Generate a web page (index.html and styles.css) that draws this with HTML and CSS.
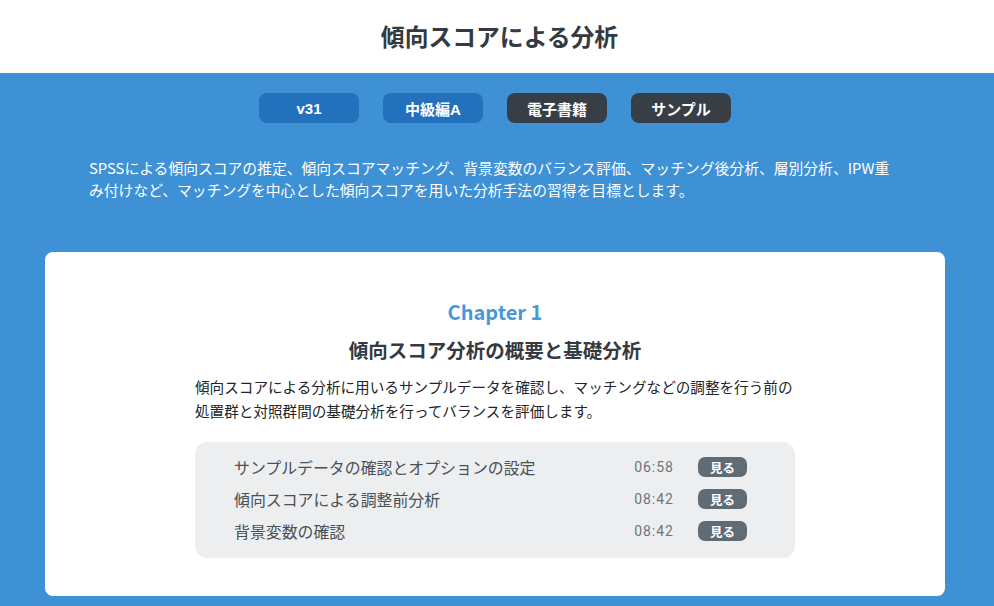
FILE: index.html
```html
<!DOCTYPE html>
<html lang="ja">
<head>
<meta charset="utf-8">
<title>傾向スコアによる分析</title>
<link rel="stylesheet" href="styles.css">
</head>
<body>
<header class="top">
  <h1 class="title">傾向スコアによる分析</h1>
</header>
<main class="hero">
  <div class="badges">
    <span class="badge badge-blue">v31</span>
    <span class="badge badge-blue">中級編A</span>
    <span class="badge badge-dark">電子書籍</span>
    <span class="badge badge-dark">サンプル</span>
  </div>
  <p class="desc">SPSSによる傾向スコアの推定、傾向スコアマッチング、背景変数のバランス評価、マッチング後分析、層別分析、IPW重み付けなど、マッチングを中心とした傾向スコアを用いた分析手法の習得を目標とします。</p>
  <section class="card">
    <div class="card-inner">
      <div class="chapter">Chapter 1</div>
      <h2 class="chapter-title">傾向スコア分析の概要と基礎分析</h2>
      <p class="chapter-text">傾向スコアによる分析に用いるサンプルデータを確認し、マッチングなどの調整を行う前の処置群と対照群間の基礎分析を行ってバランスを評価します。</p>
      <ul class="lessons">
        <li class="lesson"><span class="lesson-name">サンプルデータの確認とオプションの設定</span><span class="lesson-time">06:58</span><span class="watch">見る</span></li>
        <li class="lesson"><span class="lesson-name">傾向スコアによる調整前分析</span><span class="lesson-time">08:42</span><span class="watch">見る</span></li>
        <li class="lesson"><span class="lesson-name">背景変数の確認</span><span class="lesson-time">08:42</span><span class="watch">見る</span></li>
      </ul>
    </div>
  </section>
</main>
</body>
</html>
```
FILE: styles.css
```css
* { box-sizing: border-box; }
html, body { margin: 0; padding: 0; }
body {
  font-family: "Noto Sans CJK JP", "Noto Sans", sans-serif;
  background: #3d91d4;
  color: #343a40;
  height: 606px;
  overflow: hidden;
}
.top {
  background: #ffffff;
  height: 73px;
  display: flex;
  align-items: center;
  justify-content: center;
}
.title {
  margin: 0;
  font-size: 23.8px;
  font-weight: 700;
  color: #343a40;
  line-height: 1.2;
  padding-left: 5px;
}
.hero {
  padding-top: 20px;
}
.badges {
  display: flex;
  justify-content: center;
  gap: 24px;
  padding-right: 4px;
}
.badge {
  width: 100px;
  height: 30px;
  border-radius: 8px;
  display: flex;
  align-items: center;
  justify-content: center;
  color: #ffffff;
  font-family: "Liberation Sans", "Noto Sans CJK JP", sans-serif;
  font-size: 15px;
  font-weight: 700;
}
.badge-blue { background: #2371bd; }
.badge-dark { background: #373e46; }
.desc {
  width: 806px;
  margin: 34px 0 0 89px;
  color: #ffffff;
  font-size: 14.8px;
  line-height: 22px;
}
.card {
  margin: 51px 49px 0 45px;
  background: #ffffff;
  border-radius: 8px;
  padding: 46px 0 38px;
}
.card-inner {
  width: 600px;
  margin: 0 auto;
}
.chapter {
  text-align: center;
  color: #4a97d6;
  font-size: 20px;
  font-weight: 700;
  line-height: 28px;
}
.chapter-title {
  margin: 10px 0 0;
  text-align: center;
  font-size: 19.5px;
  font-weight: 700;
  line-height: 28px;
  color: #343a40;
}
.chapter-text {
  margin: 11px 0 0;
  font-size: 14.6px;
  line-height: 24px;
  color: #212529;
}
.lessons {
  list-style: none;
  margin: 19px 0 0;
  padding: 9px 48px 11px 39px;
  background: #eceef0;
  border-radius: 12px;
}
.lesson {
  display: flex;
  align-items: center;
  height: 32px;
}
.lesson-name {
  flex: 1;
  font-size: 15.9px;
  color: #495057;
}
.lesson-time {
  font-family: Roboto, "Liberation Sans", sans-serif;
  font-size: 14px;
  color: #6c757d;
  margin-right: 24px;
  letter-spacing: 1px;
}
.watch {
  width: 49px;
  height: 20px;
  border-radius: 7px;
  background: #5f6b75;
  color: #ffffff;
  font-size: 12.5px;
  font-weight: 700;
  display: flex;
  align-items: center;
  justify-content: center;
}
```
